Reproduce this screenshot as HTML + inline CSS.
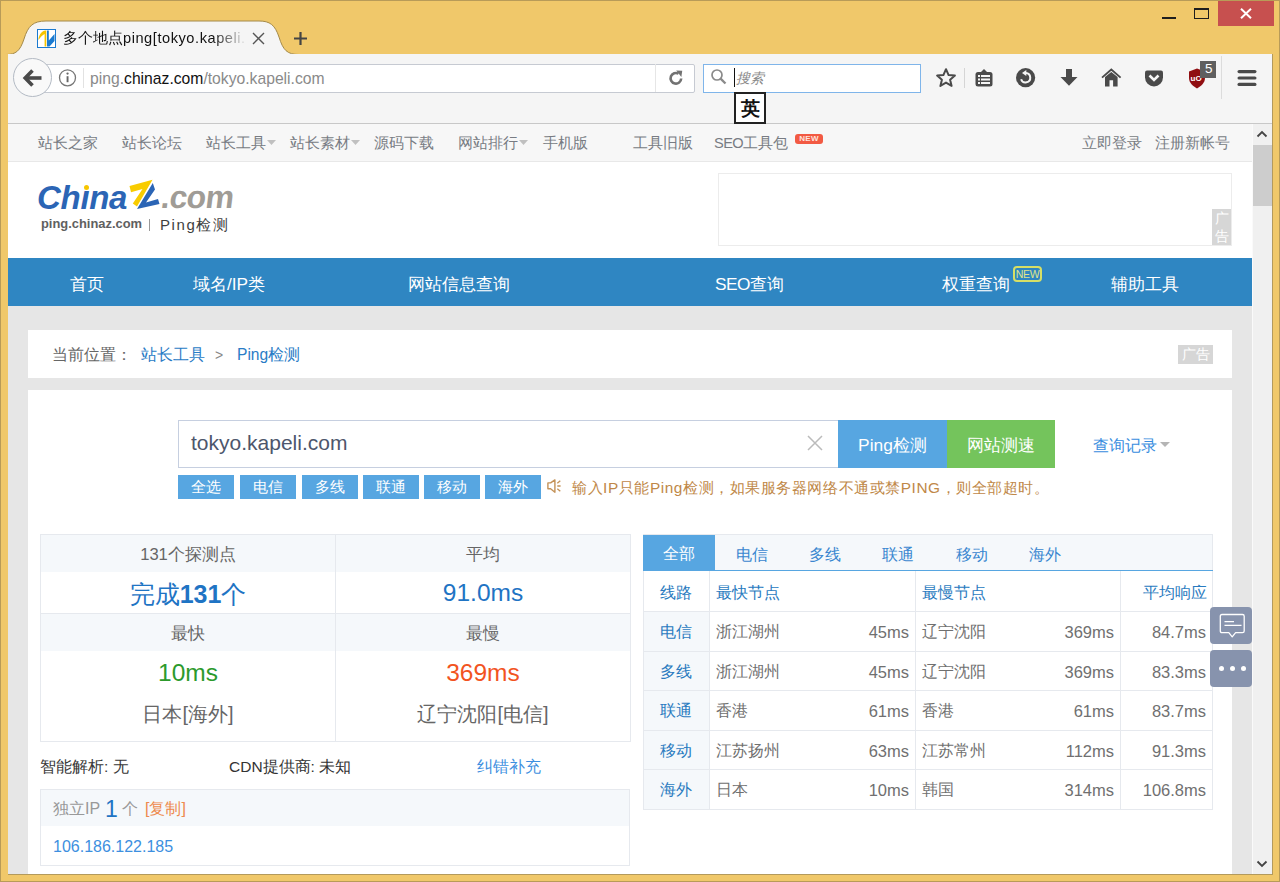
<!DOCTYPE html>
<html><head><meta charset="utf-8">
<style>
*{margin:0;padding:0;box-sizing:border-box}
html,body{width:1280px;height:882px;overflow:hidden;background:#f0c86a;font-family:"Liberation Sans",sans-serif;position:relative}
.a{position:absolute;white-space:nowrap}
.t{position:absolute;white-space:nowrap}
b{font-weight:bold}
</style></head><body>
<div class="a" style="left:0px;top:0px;width:1280px;height:882px;background:#f0c86a;border:1px solid #b89b58"></div>
<div class="a" style="left:1162px;top:17px;width:14px;height:2px;background:#1e1e1e;"></div>
<div class="a" style="left:1194px;top:8px;width:15px;height:11px;border:1px solid #1e1e1e;border-top:2px solid #1e1e1e"></div>
<div class="a" style="left:1218px;top:1px;width:56px;height:25px;background:#c7504f;"></div>
<svg class="a" style="left:1240px;top:8px" width="12" height="11" viewBox="0 0 12 11"><path d="M1 0.8L11 10.2M11 0.8L1 10.2" stroke="#fff" stroke-width="2"/></svg>
<svg class="a" style="left:0;top:19px" width="300" height="36" viewBox="0 0 300 36">
<path d="M6 35.5 C 16 35.5, 20 32, 24 20 C 28 7, 33 2, 46 2 L 259 2 C 270 2, 275 6, 279 18 C 283 31, 287 35.5, 299 35.5 L299 36 L6 36 Z" fill="#f5f5f5" stroke="#a48a4a" stroke-width="1"/>
</svg>
<div class="a" style="left:8px;top:54px;width:1265px;height:70px;background:#f5f5f5;border-bottom:1px solid #c8c8c8"></div>
<svg class="a" style="left:37px;top:29px" width="19" height="19" viewBox="0 0 19 19">
<rect x="0.5" y="0.5" width="18" height="18" fill="#fff" stroke="#1a7ad0" stroke-width="1"/>
<path d="M1.5 9.5 C2.5 5, 5 2, 8.5 1.5 L 9.3 1.5 L 9.3 17.5 L 7.6 17.5 L 7.6 5 C 5.5 6, 3.5 8, 1.5 11 Z" fill="#f5c400"/>
<path d="M10 1.5 L 11.8 1.5 L 11.8 11.5 L 17.5 5 L 17.5 12 L 12.5 17.5 L 10 17.5 Z" fill="#1a7ad0"/>
</svg>
<div class="t" style="left:63px;top:27px;font-size:14.6px;color:#111;line-height:22px;width:181px;overflow:hidden;-webkit-mask-image:linear-gradient(to right,#000 150px,rgba(0,0,0,0.1) 181px)">多个地点<span style="letter-spacing:0.55px">ping[tokyo.kapeli.com]</span></div>
<svg class="a" style="left:252px;top:32px" width="13" height="13" viewBox="0 0 13 13"><path d="M1 1L12 12M12 1L1 12" stroke="#555" stroke-width="1.4"/></svg>
<svg class="a" style="left:293px;top:31px" width="15" height="15" viewBox="0 0 15 15"><path d="M7.5 1V14M1 7.5H14" stroke="#444" stroke-width="2.2"/></svg>
<div class="a" style="left:30px;top:64px;width:665px;height:29px;background:#fff;border:1px solid #c6cad2;border-radius:2px"></div>
<div class="a" style="left:13px;top:58px;width:39px;height:39px;border-radius:50%;background:#f9f9f9;border:1px solid #b3bac4"></div>
<svg class="a" style="left:22px;top:68px" width="21" height="20" viewBox="0 0 21 20"><path d="M3 10H19.5" stroke="#4a4a4a" stroke-width="3.6"/><path d="M10.5 2.5L3.2 10L10.5 17.5" fill="none" stroke="#4a4a4a" stroke-width="3.6"/></svg>
<svg class="a" style="left:58px;top:68px" width="19" height="19" viewBox="0 0 19 19"><circle cx="9.5" cy="9.8" r="8" fill="none" stroke="#777" stroke-width="1.3"/><rect x="8.6" y="8.2" width="1.9" height="6" fill="#666"/><circle cx="9.55" cy="5.6" r="1.15" fill="#666"/></svg>
<div class="a" style="left:83px;top:68px;width:1px;height:20px;background:#e2e2e2;"></div>
<div class="t" style="left:90px;top:68px;font-size:15.7px;color:#8a8a8a;line-height:22px">ping.<span style="color:#111">chinaz.com</span>/tokyo.kapeli.com</div>
<div class="a" style="left:655px;top:64px;width:1px;height:28px;background:#e6e6e6;"></div>
<svg class="a" style="left:667px;top:69px" width="18" height="18" viewBox="0 0 18 18"><path d="M14.2 9.5 A5.3 5.3 0 1 1 11.6 4.7" fill="none" stroke="#727272" stroke-width="2.6"/><path d="M9.2 1.5 L15.2 1.8 L14.4 8 Z" fill="#727272"/></svg>
<div class="a" style="left:703px;top:64px;width:218px;height:29px;background:#fff;border:1px solid #7fb5ea"></div>
<svg class="a" style="left:710px;top:68px" width="18" height="18" viewBox="0 0 18 18"><circle cx="7" cy="7" r="5" fill="none" stroke="#8a8a8a" stroke-width="1.7"/><path d="M10.6 10.6L15.5 15.5" stroke="#8a8a8a" stroke-width="2.3"/></svg>
<div class="a" style="left:734px;top:68px;width:1px;height:19px;background:#111;"></div>
<div class="t" style="left:736px;top:67px;font-size:14px;color:#8a8a8a;line-height:22px;font-style:italic">搜索</div>
<div class="a" style="left:734px;top:92px;width:32px;height:32px;background:#fff;border:2px solid #222"></div>
<div class="t" style="left:741px;top:98px;font-size:19px;color:#111;line-height:22px;font-weight:bold">英</div>
<svg class="a" style="left:935px;top:67px" width="22" height="22" viewBox="0 0 22 22"><path d="M11 2.2L13.6 8.1L19.9 8.6L15.1 12.7L16.6 18.9L11 15.6L5.4 18.9L6.9 12.7L2.1 8.6L8.4 8.1Z" fill="none" stroke="#4a4a4a" stroke-width="2" stroke-linejoin="round"/></svg>
<div class="a" style="left:964px;top:68px;width:1px;height:20px;background:#d5d5d5;"></div>
<svg class="a" style="left:974px;top:68px" width="20" height="20" viewBox="0 0 20 20"><rect x="1.5" y="4" width="17" height="14.5" rx="2.5" fill="#4a4a4a"/><path d="M6.5 4.5 L10 1 L13.5 4.5Z" fill="#4a4a4a"/><rect x="4" y="7" width="2" height="2" fill="#f5f5f5"/><rect x="7" y="7" width="9" height="2" fill="#f5f5f5"/><rect x="4" y="10.5" width="2" height="2" fill="#f5f5f5"/><rect x="7" y="10.5" width="9" height="2" fill="#f5f5f5"/><rect x="4" y="14" width="2" height="2" fill="#f5f5f5"/><rect x="7" y="14" width="9" height="2" fill="#f5f5f5"/></svg>
<svg class="a" style="left:1016px;top:68px" width="20" height="20" viewBox="0 0 20 20"><circle cx="9.6" cy="9.7" r="9.6" fill="#4a4a4a"/><path d="M5.1 11.2 A4.7 4.7 0 1 0 9.8 5.0" fill="none" stroke="#f5f5f5" stroke-width="2"/><path d="M6.0 5.0 L10.3 1.9 L10.3 8.1 Z" fill="#f5f5f5"/></svg>
<svg class="a" style="left:1059px;top:68px" width="20" height="20" viewBox="0 0 20 20"><rect x="7" y="1" width="6" height="9" fill="#4a4a4a"/><path d="M1.5 9H18.5L10 17.8Z" fill="#4a4a4a"/></svg>
<svg class="a" style="left:1101px;top:67px" width="21" height="21" viewBox="0 0 21 21"><path d="M1 10.6 L10.3 2.6 L19.6 10.6" fill="none" stroke="#4a4a4a" stroke-width="1.9"/><path d="M4 10 L10.3 4.9 L16.6 10 V19.6 H12.1 V13.2 H8.5 V19.6 H4 Z" fill="#4a4a4a"/></svg>
<svg class="a" style="left:1144px;top:68px" width="20" height="20" viewBox="0 0 20 20"><path d="M3 2.5 H17 Q19 2.5 19 4.5 V9.5 A9 9 0 0 1 1 9.5 V4.5 Q1 2.5 3 2.5 Z" fill="#4a4a4a"/><path d="M5.5 7.5 L10 12 L14.5 7.5" fill="none" stroke="#f5f5f5" stroke-width="2.6"/></svg>
<svg class="a" style="left:1187px;top:67px" width="22" height="22" viewBox="0 0 22 22"><path d="M2 4.5 L10 1.5 L18 4.5 L18 11 C18 16,14 19,10 21.5 C6 19,2 16,2 11Z" fill="#900e12"/><text x="3.6" y="14" font-size="8" font-family="Liberation Sans" fill="#fff" font-weight="bold">uO</text></svg>
<div class="a" style="left:1200px;top:61px;width:16px;height:17px;background:#5f5f5f;"></div>
<div class="t" style="left:1205px;top:60px;font-size:13.5px;color:#fff;line-height:18px;">5</div>
<div class="a" style="left:1221px;top:56px;width:1px;height:43px;background:#dcdcdc;"></div>
<svg class="a" style="left:1236px;top:68px" width="22" height="20" viewBox="0 0 22 20"><rect x="1.5" y="2" width="19" height="3.2" rx="1.6" fill="#4a4a4a"/><rect x="1.5" y="8.4" width="19" height="3.2" rx="1.6" fill="#4a4a4a"/><rect x="1.5" y="14.8" width="19" height="3.2" rx="1.6" fill="#4a4a4a"/></svg>
<div class="a" style="left:8px;top:124px;width:1245px;height:751px;background:#e6e6e6;"></div>
<div class="a" style="left:8px;top:124px;width:1245px;height:134px;background:#fff;"></div>
<div class="a" style="left:8px;top:124px;width:1245px;height:37px;background:#f7f7f7;"></div>
<div class="a" style="left:8px;top:161px;width:1245px;height:1px;background:#e8e8e8;"></div>
<div class="t" style="left:38px;top:133px;font-size:14.6px;color:#787c83;line-height:20px;">站长之家</div>
<div class="t" style="left:122px;top:133px;font-size:14.6px;color:#787c83;line-height:20px;">站长论坛</div>
<div class="t" style="left:206px;top:133px;font-size:14.6px;color:#787c83;line-height:20px;">站长工具</div>
<div class="t" style="left:290px;top:133px;font-size:14.6px;color:#787c83;line-height:20px;">站长素材</div>
<div class="t" style="left:374px;top:133px;font-size:14.6px;color:#787c83;line-height:20px;">源码下载</div>
<div class="t" style="left:458px;top:133px;font-size:14.6px;color:#787c83;line-height:20px;">网站排行</div>
<div class="t" style="left:543px;top:133px;font-size:14.6px;color:#787c83;line-height:20px;">手机版</div>
<div class="t" style="left:633px;top:133px;font-size:14.6px;color:#787c83;line-height:20px;">工具旧版</div>
<div class="t" style="left:714px;top:133px;font-size:14.6px;color:#787c83;line-height:20px;"><span style="letter-spacing:-0.6px">SEO</span>工具包</div>
<div class="t" style="left:1082px;top:133px;font-size:14.6px;color:#787c83;line-height:20px;">立即登录</div>
<div class="t" style="left:1155px;top:133px;font-size:14.6px;color:#787c83;line-height:20px;">注册新帐号</div>
<svg class="a" style="left:267px;top:140px" width="10" height="6"><path d="M0 0H9L4.5 5Z" fill="#c0c0c0"/></svg>
<svg class="a" style="left:351px;top:140px" width="10" height="6"><path d="M0 0H9L4.5 5Z" fill="#c0c0c0"/></svg>
<svg class="a" style="left:519px;top:140px" width="10" height="6"><path d="M0 0H9L4.5 5Z" fill="#c0c0c0"/></svg>
<div class="a" style="left:795px;top:134px;width:28px;height:10px;background:#f25a43;border-radius:3px;color:#ffe3dc;font-size:8px;font-weight:bold;line-height:10px;text-align:center;letter-spacing:0.3px">NEW</div>
<div class="t" style="left:37px;top:178px;font-size:33px;font-weight:bold;font-style:italic;color:#2b65b5;line-height:40px;letter-spacing:-0.3px">Ch<span style="position:relative">ı<span style="position:absolute;left:4px;top:6px;width:5px;height:5px;border-radius:50%;background:#f7c600"></span></span>na</div>
<svg class="a" style="left:125px;top:176px" width="40" height="36" viewBox="125 176 40 36"><path d="M129.5 186 L152.5 179.8 L137 206.5 L132.8 203.5 L142.5 189 L131 192.2 Z" fill="#f8cc00"/><path d="M152.8 183 L155 189.5 L146 202.5 L158 199 L159.5 204 L137 209 Z" fill="#2b65b5"/></svg>
<div class="t" style="left:160px;top:177px;font-size:32px;font-weight:bold;color:#a09c96;line-height:40px;letter-spacing:-0.6px;transform:skewX(-7deg);transform-origin:0 32px">.com</div>
<div class="t" style="left:41px;top:215px;font-size:12.9px;color:#606060;line-height:18px;font-weight:bold">ping.chinaz.com</div>
<div class="a" style="left:149px;top:219px;width:1px;height:12px;background:#999;"></div>
<div class="t" style="left:160px;top:215px;font-size:15px;color:#3e3e3e;line-height:20px;letter-spacing:1.6px">Ping检测</div>
<div class="a" style="left:718px;top:173px;width:514px;height:73px;border:1px solid #ececec;background:#fff"></div>
<div class="a" style="left:1212px;top:209px;width:19px;height:36px;background:#d6d6d6;"></div>
<div class="t" style="left:1215px;top:209px;font-size:14px;color:#fff;line-height:18px;width:15px;white-space:normal">广告</div>
<div class="a" style="left:8px;top:258px;width:1244px;height:48px;background:#2f86c2;"></div>
<div class="t" style="left:70px;top:272px;font-size:17.3px;color:#fff;line-height:24px;">首页</div>
<div class="t" style="left:193px;top:272px;font-size:17.3px;color:#fff;line-height:24px;">域名/IP类</div>
<div class="t" style="left:408px;top:272px;font-size:17.3px;color:#fff;line-height:24px;">网站信息查询</div>
<div class="t" style="left:715px;top:272px;font-size:17.3px;color:#fff;line-height:24px;"><span style="letter-spacing:-0.5px">SEO</span>查询</div>
<div class="t" style="left:942px;top:272px;font-size:17.3px;color:#fff;line-height:24px;">权重查询</div>
<div class="t" style="left:1111px;top:272px;font-size:17.3px;color:#fff;line-height:24px;">辅助工具</div>
<div class="a" style="left:1013px;top:266px;width:29px;height:16px;border:2px solid #d6df66;border-radius:4px;color:#dfe58a;font-size:10.5px;line-height:12px;text-align:center;letter-spacing:-0.3px">NEW</div>
<div class="a" style="left:28px;top:330px;width:1204px;height:48px;background:#fff;"></div>
<div class="t" style="left:52px;top:344px;font-size:15.6px;color:#666;line-height:22px;">当前位置：</div>
<div class="t" style="left:141px;top:344px;font-size:15.6px;color:#2a7cc6;line-height:22px;">站长工具</div>
<div class="t" style="left:215px;top:344px;font-size:14px;color:#888;line-height:22px;">&gt;</div>
<div class="t" style="left:237px;top:344px;font-size:15.6px;color:#2a7cc6;line-height:22px;">Ping检测</div>
<div class="a" style="left:1178px;top:345px;width:35px;height:19px;background:#d6d6d6;color:#fff;font-size:14px;line-height:19px;text-align:center">广告</div>
<div class="a" style="left:28px;top:390px;width:1204px;height:490px;background:#fff;"></div>
<div class="a" style="left:178px;top:420px;width:661px;height:48px;border:1px solid #c6cfe0;background:#fff"></div>
<div class="t" style="left:191px;top:430px;font-size:21px;color:#4d566c;line-height:26px;">tokyo.kapeli.com</div>
<svg class="a" style="left:807px;top:435px" width="16" height="16" viewBox="0 0 16 16"><path d="M1 1L15 15M15 1L1 15" stroke="#bbb" stroke-width="1.5"/></svg>
<div class="a" style="left:838px;top:420px;width:109px;height:48px;background:#57a6e1;color:#fff;font-size:17.4px;line-height:50px;text-align:center">Ping检测</div>
<div class="a" style="left:947px;top:420px;width:108px;height:48px;background:#74c45c;color:#fff;font-size:17.4px;line-height:50px;text-align:center">网站测速</div>
<div class="t" style="left:1093px;top:435px;font-size:16px;color:#3a8ee0;line-height:22px;">查询记录</div>
<svg class="a" style="left:1160px;top:442px" width="11" height="6"><path d="M0 0H10L5 5Z" fill="#b5b5b5"/></svg>
<div class="a" style="left:178px;top:475px;width:56px;height:24px;background:#57a6e1;color:#fff;font-size:15px;line-height:24px;text-align:center">全选</div>
<div class="a" style="left:240px;top:475px;width:56px;height:24px;background:#57a6e1;color:#fff;font-size:15px;line-height:24px;text-align:center">电信</div>
<div class="a" style="left:302px;top:475px;width:56px;height:24px;background:#57a6e1;color:#fff;font-size:15px;line-height:24px;text-align:center">多线</div>
<div class="a" style="left:363px;top:475px;width:56px;height:24px;background:#57a6e1;color:#fff;font-size:15px;line-height:24px;text-align:center">联通</div>
<div class="a" style="left:424px;top:475px;width:56px;height:24px;background:#57a6e1;color:#fff;font-size:15px;line-height:24px;text-align:center">移动</div>
<div class="a" style="left:485px;top:475px;width:56px;height:24px;background:#57a6e1;color:#fff;font-size:15px;line-height:24px;text-align:center">海外</div>
<svg class="a" style="left:546px;top:478px" width="17" height="16" viewBox="546 478 17 16"><path d="M547.9 482.9 H550.6 L554.9 479.9 V492.2 L550.6 488.7 H547.9 Z" fill="none" stroke="#c49258" stroke-width="1.4" stroke-linejoin="round"/><path d="M557.3 483.3 L560.3 480.8 M557.3 486 H560.6 M557.3 488.7 L560.3 491.2" stroke="#c49258" stroke-width="1.3"/></svg>
<div class="t" style="left:572px;top:477px;font-size:15.4px;color:#c08848;line-height:22px;letter-spacing:0.56px">输入IP只能Ping检测，如果服务器网络不通或禁PING，则全部超时。</div>
<div class="a" style="left:40px;top:534px;width:591px;height:208px;border:1px solid #e6e9ee;background:#fff"></div>
<div class="a" style="left:41px;top:535px;width:589px;height:37px;background:#f5f8fb;"></div>
<div class="a" style="left:41px;top:613px;width:589px;height:1px;background:#e6e9ee;"></div>
<div class="a" style="left:41px;top:614px;width:589px;height:37px;background:#f5f8fb;"></div>
<div class="a" style="left:335px;top:535px;width:1px;height:206px;background:#e6e9ee;"></div>
<div class="a" style="left:41px;top:544px;width:294px;line-height:22px;font-size:16.6px;color:#666;text-align:center">131个探测点</div>
<div class="a" style="left:336px;top:544px;width:294px;line-height:22px;font-size:16.6px;color:#666;text-align:center">平均</div>
<div class="a" style="left:41px;top:579px;width:294px;line-height:30px;font-size:25px;color:#1f74c4;text-align:center">完成<b>131</b>个</div>
<div class="a" style="left:336px;top:578px;width:294px;line-height:30px;font-size:24.5px;color:#1f74c4;text-align:center">91.0ms</div>
<div class="a" style="left:41px;top:623px;width:294px;line-height:22px;font-size:16.6px;color:#666;text-align:center">最快</div>
<div class="a" style="left:336px;top:623px;width:294px;line-height:22px;font-size:16.6px;color:#666;text-align:center">最慢</div>
<div class="a" style="left:41px;top:658px;width:294px;line-height:30px;font-size:24.5px;color:#2c9a2c;text-align:center">10ms</div>
<div class="a" style="left:336px;top:658px;width:294px;line-height:30px;font-size:24.5px;color:#f2541f;text-align:center">369ms</div>
<div class="a" style="left:41px;top:701px;width:294px;line-height:26px;font-size:20px;color:#666;text-align:center">日本[海外]</div>
<div class="a" style="left:336px;top:701px;width:294px;line-height:26px;font-size:20px;color:#666;text-align:center">辽宁沈阳[电信]</div>
<div class="t" style="left:40px;top:756px;font-size:15.5px;color:#383838;line-height:22px;">智能解析: 无</div>
<div class="t" style="left:229px;top:756px;font-size:15.5px;color:#333;line-height:22px;">CDN提供商: 未知</div>
<div class="t" style="left:477px;top:756px;font-size:15.5px;color:#3d8fe0;line-height:22px;">纠错补充</div>
<div class="a" style="left:40px;top:789px;width:590px;height:77px;border:1px solid #e6e9ee;background:#fff"></div>
<div class="a" style="left:41px;top:790px;width:588px;height:36px;background:#f5f8fb;"></div>
<div class="t" style="left:53px;top:798px;font-size:16px;color:#999;line-height:22px;">独立IP</div>
<div class="t" style="left:105px;top:794px;font-size:23px;color:#1f74c4;line-height:30px;">1</div>
<div class="t" style="left:122px;top:798px;font-size:16px;color:#999;line-height:22px;">个</div>
<div class="t" style="left:145px;top:798px;font-size:16px;color:#ee8a4e;line-height:22px;">[复制]</div>
<div class="t" style="left:53px;top:836px;font-size:16px;color:#3d8fe0;line-height:22px;">106.186.122.185</div>
<div class="a" style="left:643px;top:534px;width:570px;height:276px;border:1px solid #e6e9ee;background:#fff"></div>
<div class="a" style="left:644px;top:535px;width:568px;height:35px;background:#f5f8fb;"></div>
<div class="a" style="left:643px;top:535px;width:72px;height:35px;background:#57a6e1;color:#fff;font-size:16px;line-height:38px;text-align:center">全部</div>
<div class="a" style="left:643px;top:570px;width:570px;height:1px;background:#57a6e1;"></div>
<div class="a" style="left:715.0px;top:536px;width:73px;height:35px;color:#3a87d0;font-size:16px;line-height:37px;text-align:center">电信</div>
<div class="a" style="left:788.4px;top:536px;width:73px;height:35px;color:#3a87d0;font-size:16px;line-height:37px;text-align:center">多线</div>
<div class="a" style="left:861.8px;top:536px;width:73px;height:35px;color:#3a87d0;font-size:16px;line-height:37px;text-align:center">联通</div>
<div class="a" style="left:935.2px;top:536px;width:73px;height:35px;color:#3a87d0;font-size:16px;line-height:37px;text-align:center">移动</div>
<div class="a" style="left:1008.6px;top:536px;width:73px;height:35px;color:#3a87d0;font-size:16px;line-height:37px;text-align:center">海外</div>
<div class="a" style="left:709px;top:571px;width:1px;height:238px;background:#e6e9ee;"></div>
<div class="a" style="left:915px;top:571px;width:1px;height:238px;background:#e6e9ee;"></div>
<div class="a" style="left:1120px;top:571px;width:1px;height:238px;background:#e6e9ee;"></div>
<div class="t" style="left:660px;top:582px;font-size:15.5px;color:#2a7bc0;line-height:22px;">线路</div>
<div class="t" style="left:716px;top:582px;font-size:15.5px;color:#2a7bc0;line-height:22px;">最快节点</div>
<div class="t" style="left:922px;top:582px;font-size:15.5px;color:#2a7bc0;line-height:22px;">最慢节点</div>
<div class="t" style="left:1143px;top:582px;font-size:15.5px;color:#2a7bc0;line-height:22px;">平均响应</div>
<div class="a" style="left:643px;top:611px;width:570px;height:1px;background:#e6e9ee;"></div>
<div class="a" style="left:644px;top:612px;width:65px;height:39px;background:#f5f8fb;"></div>
<div class="t" style="left:660px;top:621px;font-size:15.5px;color:#2a7bc0;line-height:22px;">电信</div>
<div class="t" style="left:716px;top:621px;font-size:15.5px;color:#707070;line-height:22px;">浙江湖州</div>
<div class="t" style="right:371px;top:621px;font-size:16.5px;color:#707070;line-height:22px">45ms</div>
<div class="t" style="left:922px;top:621px;font-size:15.5px;color:#707070;line-height:22px;">辽宁沈阳</div>
<div class="t" style="right:166px;top:621px;font-size:16.5px;color:#707070;line-height:22px">369ms</div>
<div class="t" style="right:74px;top:621px;font-size:16.5px;color:#707070;line-height:22px">84.7ms</div>
<div class="a" style="left:643px;top:651px;width:570px;height:1px;background:#e6e9ee;"></div>
<div class="a" style="left:644px;top:652px;width:65px;height:39px;background:#f5f8fb;"></div>
<div class="t" style="left:660px;top:661px;font-size:15.5px;color:#2a7bc0;line-height:22px;">多线</div>
<div class="t" style="left:716px;top:661px;font-size:15.5px;color:#707070;line-height:22px;">浙江湖州</div>
<div class="t" style="right:371px;top:661px;font-size:16.5px;color:#707070;line-height:22px">45ms</div>
<div class="t" style="left:922px;top:661px;font-size:15.5px;color:#707070;line-height:22px;">辽宁沈阳</div>
<div class="t" style="right:166px;top:661px;font-size:16.5px;color:#707070;line-height:22px">369ms</div>
<div class="t" style="right:74px;top:661px;font-size:16.5px;color:#707070;line-height:22px">83.3ms</div>
<div class="a" style="left:643px;top:690px;width:570px;height:1px;background:#e6e9ee;"></div>
<div class="a" style="left:644px;top:691px;width:65px;height:39px;background:#f5f8fb;"></div>
<div class="t" style="left:660px;top:700px;font-size:15.5px;color:#2a7bc0;line-height:22px;">联通</div>
<div class="t" style="left:716px;top:700px;font-size:15.5px;color:#707070;line-height:22px;">香港</div>
<div class="t" style="right:371px;top:700px;font-size:16.5px;color:#707070;line-height:22px">61ms</div>
<div class="t" style="left:922px;top:700px;font-size:15.5px;color:#707070;line-height:22px;">香港</div>
<div class="t" style="right:166px;top:700px;font-size:16.5px;color:#707070;line-height:22px">61ms</div>
<div class="t" style="right:74px;top:700px;font-size:16.5px;color:#707070;line-height:22px">83.7ms</div>
<div class="a" style="left:643px;top:730px;width:570px;height:1px;background:#e6e9ee;"></div>
<div class="a" style="left:644px;top:731px;width:65px;height:39px;background:#f5f8fb;"></div>
<div class="t" style="left:660px;top:740px;font-size:15.5px;color:#2a7bc0;line-height:22px;">移动</div>
<div class="t" style="left:716px;top:740px;font-size:15.5px;color:#707070;line-height:22px;">江苏扬州</div>
<div class="t" style="right:371px;top:740px;font-size:16.5px;color:#707070;line-height:22px">63ms</div>
<div class="t" style="left:922px;top:740px;font-size:15.5px;color:#707070;line-height:22px;">江苏常州</div>
<div class="t" style="right:166px;top:740px;font-size:16.5px;color:#707070;line-height:22px">112ms</div>
<div class="t" style="right:74px;top:740px;font-size:16.5px;color:#707070;line-height:22px">91.3ms</div>
<div class="a" style="left:643px;top:769px;width:570px;height:1px;background:#e6e9ee;"></div>
<div class="a" style="left:644px;top:770px;width:65px;height:39px;background:#f5f8fb;"></div>
<div class="t" style="left:660px;top:779px;font-size:15.5px;color:#2a7bc0;line-height:22px;">海外</div>
<div class="t" style="left:716px;top:779px;font-size:15.5px;color:#707070;line-height:22px;">日本</div>
<div class="t" style="right:371px;top:779px;font-size:16.5px;color:#707070;line-height:22px">10ms</div>
<div class="t" style="left:922px;top:779px;font-size:15.5px;color:#707070;line-height:22px;">韩国</div>
<div class="t" style="right:166px;top:779px;font-size:16.5px;color:#707070;line-height:22px">314ms</div>
<div class="t" style="right:74px;top:779px;font-size:16.5px;color:#707070;line-height:22px">106.8ms</div>
<div class="a" style="left:1210px;top:607px;width:42px;height:37px;background:#8793ad;border-radius:4px"></div>
<svg class="a" style="left:1218px;top:612px" width="28" height="28" viewBox="0 0 28 28"><path d="M4 2.5 H24.5 Q26.2 2.5 26.2 4.2 V19 Q26.2 20.7 24.5 20.7 H17.6 L14.2 24.8 L10.8 20.7 H4 Q2.3 20.7 2.3 19 V4.2 Q2.3 2.5 4 2.5 Z" fill="none" stroke="#fff" stroke-width="1.3" stroke-linejoin="round"/><path d="M6.5 9.6H16M6.5 13.4H23.5" stroke="#fff" stroke-width="1.3"/></svg>
<div class="a" style="left:1210px;top:650px;width:42px;height:37px;background:#8793ad;border-radius:4px"></div>
<div class="a" style="left:1218.7px;top:665.8px;width:5.2px;height:5.2px;border-radius:50%;background:#fff"></div>
<div class="a" style="left:1229.7px;top:665.8px;width:5.2px;height:5.2px;border-radius:50%;background:#fff"></div>
<div class="a" style="left:1241.0px;top:665.8px;width:5.2px;height:5.2px;border-radius:50%;background:#fff"></div>
<div class="a" style="left:1253px;top:124px;width:19px;height:751px;background:#f0f0f0;"></div>
<div class="a" style="left:1253px;top:145px;width:19px;height:61px;background:#cdcdcd;"></div>
<svg class="a" style="left:1255px;top:128px" width="14" height="12" viewBox="0 0 14 12"><path d="M2.5 8.5L7 4L11.5 8.5" fill="none" stroke="#444" stroke-width="1.8"/></svg>
<svg class="a" style="left:1255px;top:858px" width="14" height="12" viewBox="0 0 14 12"><path d="M2.5 3.5L7 8L11.5 3.5" fill="none" stroke="#444" stroke-width="1.8"/></svg>
<div class="a" style="left:0px;top:874px;width:1280px;height:8px;background:#f0c86a;"></div>
<div class="a" style="left:8px;top:874px;width:1265px;height:1px;background:#b39a5c;"></div>
<div class="a" style="left:1272px;top:54px;width:8px;height:828px;background:#f0c86a;"></div>
<div class="a" style="left:1272px;top:54px;width:1px;height:821px;background:#b39a5c;"></div>
<div class="a" style="left:0px;top:54px;width:8px;height:828px;background:#f0c86a;"></div>
<div class="a" style="left:1252px;top:124px;width:1px;height:750px;background:#fafafa;"></div>
<div class="a" style="left:0;top:0;width:1280px;height:882px;border:1px solid #b89b58"></div>
</body></html>
